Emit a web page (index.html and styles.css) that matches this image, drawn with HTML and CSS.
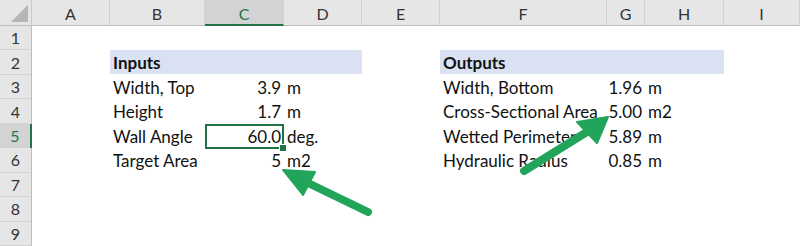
FILE: index.html
```html
<!DOCTYPE html>
<html>
<head>
<meta charset="utf-8">
<link rel="stylesheet" href="styles.css">
</head>
<body>
<div class="sheet">
  <div class="row head">
    <div class="corner"><span class="tri"></span></div>
    <div class="ch">A</div>
    <div class="ch">B</div>
    <div class="ch sel">C</div>
    <div class="ch">D</div>
    <div class="ch">E</div>
    <div class="ch">F</div>
    <div class="ch">G</div>
    <div class="ch">H</div>
    <div class="ch">I</div>
  </div>
  <div class="row">
    <div class="rh">1</div>
    <div class="c"></div><div class="c"></div><div class="c"></div><div class="c"></div><div class="c"></div><div class="c"></div><div class="c"></div><div class="c"></div><div class="c"></div>
  </div>
  <div class="row">
    <div class="rh">2</div>
    <div class="c"></div>
    <div class="c title span3">Inputs</div>
    <div class="c"></div>
    <div class="c title span3">Outputs</div>
    <div class="c"></div>
  </div>
  <div class="row">
    <div class="rh">3</div>
    <div class="c"></div>
    <div class="c lbl">Width, Top</div>
    <div class="c num">3.9</div>
    <div class="c unit">m</div>
    <div class="c"></div>
    <div class="c lbl">Width, Bottom</div>
    <div class="c num">1.96</div>
    <div class="c unit">m</div>
    <div class="c"></div>
  </div>
  <div class="row">
    <div class="rh">4</div>
    <div class="c"></div>
    <div class="c lbl">Height</div>
    <div class="c num">1.7</div>
    <div class="c unit">m</div>
    <div class="c"></div>
    <div class="c lbl">Cross-Sectional Area</div>
    <div class="c num">5.00</div>
    <div class="c unit">m2</div>
    <div class="c"></div>
  </div>
  <div class="row">
    <div class="rh sel">5</div>
    <div class="c"></div>
    <div class="c lbl">Wall Angle</div>
    <div class="c num active">60.0<span class="handle"></span></div>
    <div class="c unit">deg.</div>
    <div class="c"></div>
    <div class="c lbl">Wetted Perimeter</div>
    <div class="c num">5.89</div>
    <div class="c unit">m</div>
    <div class="c"></div>
  </div>
  <div class="row">
    <div class="rh">6</div>
    <div class="c"></div>
    <div class="c lbl">Target Area</div>
    <div class="c num">5</div>
    <div class="c unit">m2</div>
    <div class="c"></div>
    <div class="c lbl">Hydraulic Radius</div>
    <div class="c num">0.85</div>
    <div class="c unit">m</div>
    <div class="c"></div>
  </div>
  <div class="row">
    <div class="rh">7</div>
    <div class="c"></div><div class="c"></div><div class="c"></div><div class="c"></div><div class="c"></div><div class="c"></div><div class="c"></div><div class="c"></div><div class="c"></div>
  </div>
  <div class="row">
    <div class="rh">8</div>
    <div class="c"></div><div class="c"></div><div class="c"></div><div class="c"></div><div class="c"></div><div class="c"></div><div class="c"></div><div class="c"></div><div class="c"></div>
  </div>
  <div class="row">
    <div class="rh">9</div>
    <div class="c"></div><div class="c"></div><div class="c"></div><div class="c"></div><div class="c"></div><div class="c"></div><div class="c"></div><div class="c"></div><div class="c"></div>
  </div>

  <svg class="arrows" width="800" height="246" viewBox="0 0 800 246">
    <g fill="#22a55b" stroke="#22a55b" stroke-linecap="round" stroke-linejoin="round">
      <line x1="368" y1="212" x2="306" y2="182" stroke-width="8"/>
      <polygon points="283,170 315,172 303,195" stroke-width="2"/>
      <line x1="524" y1="171" x2="590" y2="130" stroke-width="8"/>
      <polygon points="608,117 577,122 597,143" stroke-width="2"/>
    </g>
  </svg>
</div>
</body>
</html>
```
FILE: styles.css
```css
html, body {
  margin: 0;
  padding: 0;
  background: #ffffff;
}
.sheet {
  position: relative;
  width: 800px;
  height: 246px;
  overflow: hidden;
  font-family: "Lato", "Noto Sans", sans-serif;
  font-size: 17px;
  color: #111;
}
.row {
  display: grid;
  grid-template-columns: 32px 78px 95px 79px 78px 78px 167px 38px 79px 76px;
  height: 24.44px;
}
.row.head {
  height: 26px;
}
.corner {
  background: #e6e6e6;
  border-right: 1px solid #c9c9c9;
  border-bottom: 1px solid #bdbdbd;
  position: relative;
}
.tri {
  position: absolute;
  right: 3px;
  bottom: 3px;
  width: 0;
  height: 0;
  border-style: solid;
  border-width: 0 0 17px 17px;
  border-color: transparent transparent #b5b5b5 transparent;
}
.ch {
  background: #e6e6e6;
  border-right: 1px solid #d0d0d0;
  border-bottom: 1px solid #bdbdbd;
  display: flex;
  align-items: center;
  justify-content: center;
  color: #333;
  padding-top: 2px;
  font-size: 16px;
}
.ch.sel {
  background: #d3d3d3;
  color: #217346;
  border-bottom: 2px solid #217346;
}
.rh {
  background: #e6e6e6;
  border-right: 1px solid #bdbdbd;
  border-bottom: 1px solid #d3d3d3;
  display: flex;
  align-items: center;
  justify-content: center;
  color: #333;
  font-size: 16px;
}
.rh.sel {
  background: #d3d3d3;
  color: #217346;
  border-right: 2px solid #217346;
}
.c {
  display: flex;
  align-items: center;
  white-space: nowrap;
  min-width: 0;
}
.span3 {
  grid-column: span 3;
}
.title {
  background: #d9e1f2;
  font-weight: bold;
  padding-left: 3px;
  margin-bottom: 1px;
}
.lbl {
  padding-left: 3px;
}
.num {
  justify-content: flex-end;
  padding-right: 3px;
}
.unit {
  padding-left: 3px;
}
.active {
  position: relative;
  box-sizing: border-box;
  border: 2px solid #217346;
  padding-right: 1px;
}
.handle {
  position: absolute;
  right: -5px;
  bottom: -5px;
  width: 6px;
  height: 6px;
  background: #217346;
  border: 1px solid #ffffff;
}
.arrows {
  position: absolute;
  left: 0;
  top: 0;
  pointer-events: none;
}
```
